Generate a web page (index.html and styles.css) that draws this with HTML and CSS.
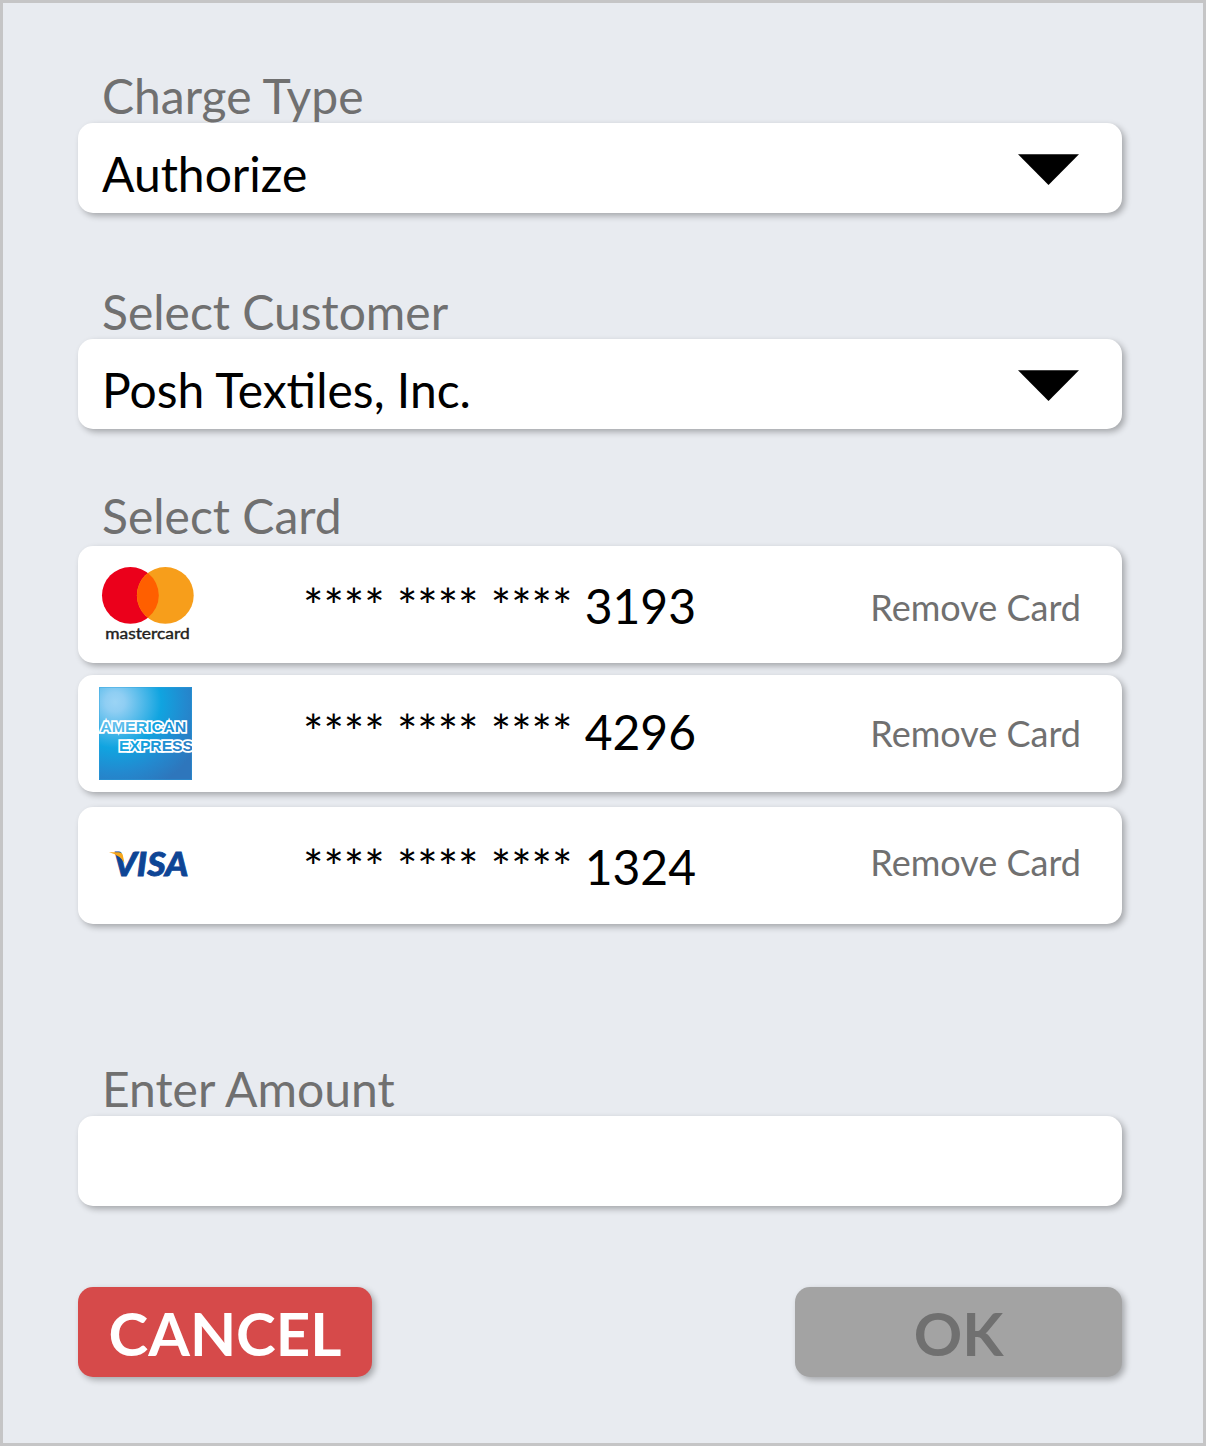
FILE: index.html
```html
<!DOCTYPE html>
<html lang="en">
<head>
<meta charset="utf-8">
<title>Charge</title>
<link rel="stylesheet" href="styles.css">
</head>
<body>
<main class="panel">
  <section class="group">
    <div class="label">Charge Type</div>
    <div class="box select"><span>Authorize</span><svg class="caret" viewBox="0 0 61 31"><path d="M0 0.3H61L30.5 31Z"/></svg></div>
  </section>
  <section class="group group-customer">
    <div class="label">Select Customer</div>
    <div class="box select"><span>Posh Textiles, Inc.</span><svg class="caret" viewBox="0 0 61 31"><path d="M0 0.3H61L30.5 31Z"/></svg></div>
  </section>
  <section class="group group-cards">
    <div class="label label-cards">Select Card</div>
    <div class="box card card-mc">
      <svg class="logo" viewBox="78 546 130 117">
        <circle cx="130.4" cy="595.4" r="28.4" fill="#eb001b"/>
        <circle cx="165.3" cy="595.4" r="28.4" fill="#f79e1b"/>
        <path d="M147.85 573a28.4 28.4 0 0 1 0 44.8a28.4 28.4 0 0 1 0-44.8Z" fill="#ff5f00"/>
        <text class="mc-name" x="105.2" y="638.9" textLength="84.500" lengthAdjust="spacingAndGlyphs">mastercard</text>
      </svg>
      <span class="number">**** **** **** 3193</span>
      <span class="remove">Remove Card</span>
    </div>
    <div class="box card card-amex">
      <svg class="logo" viewBox="78 675 130 117">
        <defs>
          <radialGradient id="amex" gradientUnits="userSpaceOnUse" cx="115" cy="702" r="98">
            <stop offset="0" stop-color="#9bd4f5"/>
            <stop offset="0.1" stop-color="#8fcef3"/>
            <stop offset="0.47" stop-color="#10a4e0"/>
            <stop offset="0.72" stop-color="#2389cf"/>
            <stop offset="0.95" stop-color="#2e76bc"/>
          </radialGradient>
          <clipPath id="square"><path d="M99 687h93v93H99z"/></clipPath>
        </defs>
        <g clip-path="url(#square)">
          <path d="M99 687h93v93H99z" fill="url(#amex)"/>
          <path d="M99.5 687.5h92v92h-92z" fill="none" stroke="#2aa0dc" stroke-opacity=".4"/>
          <g class="amex-name">
            <text x="100.2" y="732.3" textLength="86" lengthAdjust="spacingAndGlyphs">AMERICAN</text>
            <text x="119" y="750.5" textLength="74" lengthAdjust="spacingAndGlyphs">EXPRESS</text>
          </g>
        </g>
      </svg>
      <span class="number">**** **** **** 4296</span>
      <span class="remove">Remove Card</span>
    </div>
    <div class="box card card-visa">
      <svg class="logo" viewBox="78 807 130 117">
        <text class="visa-name" x="113.500" y="875.6" textLength="75" lengthAdjust="spacingAndGlyphs">VISA</text>
        <path d="M109 852.3H118.500Q122.200 852.300 122.900 855.500L124.400 863Q120.500 855.500 109 852.300Z" fill="#f7a71b"/>
      </svg>
      <span class="number">**** **** **** 1324</span>
      <span class="remove">Remove Card</span>
    </div>
  </section>
  <section class="group group-amount">
    <div class="label">Enter Amount</div>
    <div class="box"></div>
  </section>
  <div class="actions">
    <button class="button cancel">CANCEL</button>
    <button class="button ok" disabled>OK</button>
  </div>
</main>
</body>
</html>
```
FILE: styles.css
```css
* { box-sizing: border-box; }
body { margin: 0; font-family: Lato, sans-serif; }
.panel {
  width: 1206px;
  height: 1446px;
  padding: 68px 81px 0 75px;
  border: 3px solid #c5c5c6;
  background: #e8ebf0;
}
.label {
  height: 52px;
  padding: 1px 0 0 24px;
  font-size: 48px;
  line-height: 48px;
  color: #707070;
}
.label-cards { height: 55px; }
.box {
  height: 90px;
  border-radius: 15px;
  background: #fff;
  box-shadow: 3px 3px 6px rgba(0, 0, 0, .29);
}
.select {
  display: flex;
  justify-content: space-between;
  align-items: flex-start;
  padding: 27px 43px 0 24px;
  font-size: 48px;
  line-height: 48px;
}
.caret { width: 61px; height: 31px; margin-top: 4px; }
.group-customer { margin-top: 74px; }
.group-cards { margin-top: 62px; }
.group-amount { margin-top: 140px; }
.card {
  display: grid;
  grid-template-columns: 225px 1fr auto;
  align-items: start;
  height: 117px;
  padding-right: 41px;
}
.card-amex { margin-top: 12px; }
.card-visa { margin-top: 15px; }
.logo { width: 130px; height: 117px; }
.number { margin-top: 36px; font-size: 48px; line-height: 48px; white-space: pre; }
.remove { margin-top: 43px; font-size: 36px; line-height: 36px; color: #707070; }
.card-amex .number { margin-top: 33px; }
.card-amex .remove { margin-top: 40px; }
.card-visa .remove { margin-top: 37px; }
.mc-name { font: 400 14.5px Lato, sans-serif; fill: #231f20; stroke: #231f20; stroke-width: .4px; }
.amex-name {
  font: 700 15.5px "Liberation Sans", sans-serif;
  fill: url(#amex);
  stroke: #fff;
  stroke-width: 3.4px;
  paint-order: stroke;
}
.visa-name { font: italic 900 32px Lato, sans-serif; fill: #0e4595; stroke: #0e4595; stroke-width: .8px; }
.actions { display: flex; justify-content: space-between; margin-top: 81px; }
.button {
  height: 90px;
  padding: 2px 0 0;
  border: 0;
  border-radius: 15px;
  font: 700 60px/72px Lato, sans-serif;
  box-shadow: 3px 3px 6px rgba(0, 0, 0, .29);
}
.cancel { width: 294px; background: #d64a4a; color: #fff; }
.ok { width: 327px; background: #a3a3a3; color: #707070; }
```
